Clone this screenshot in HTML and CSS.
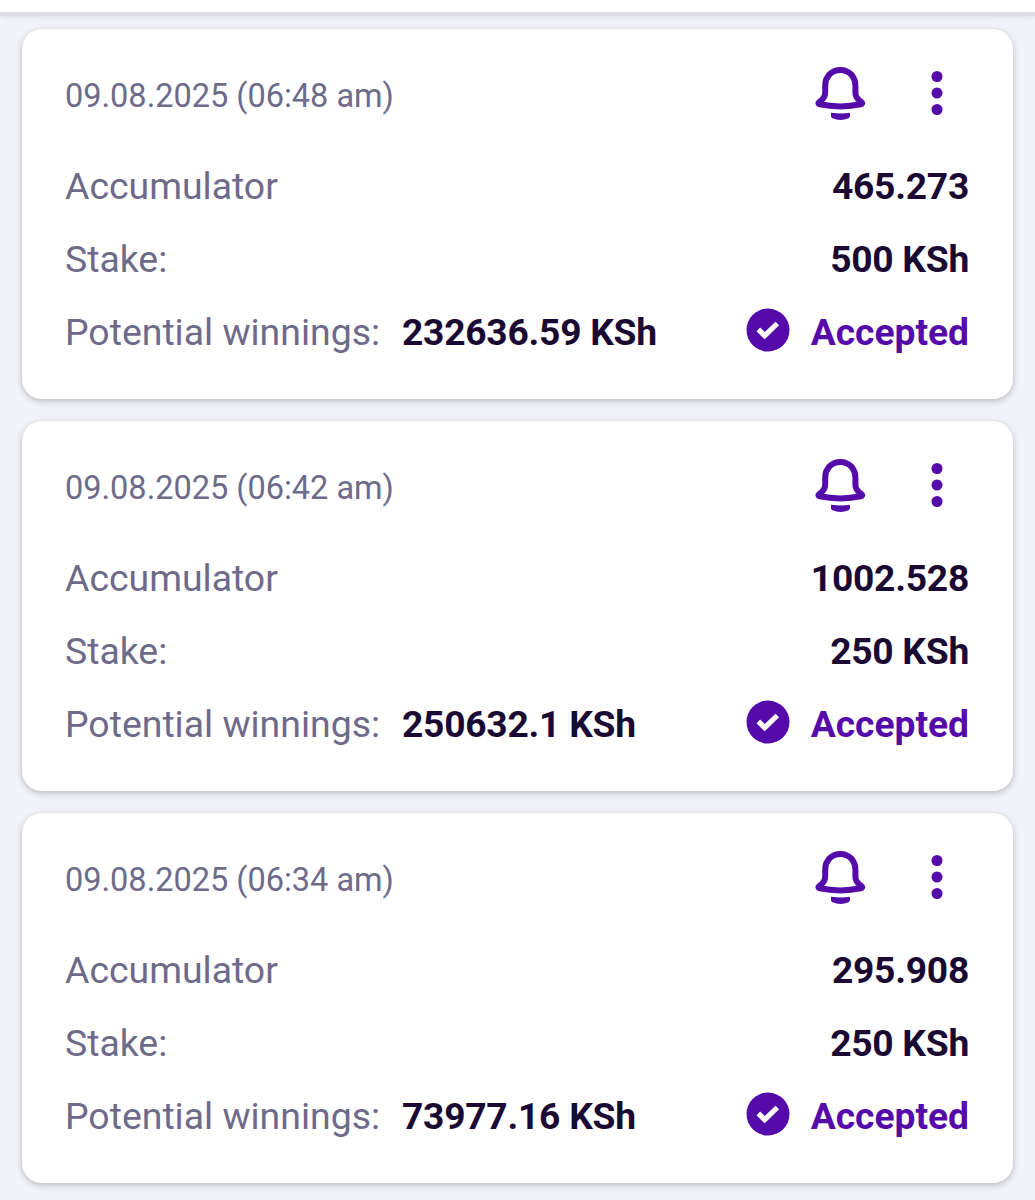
FILE: index.html
```html
<!DOCTYPE html>
<html lang="en">
<head>
  <meta charset="UTF-8" />
  <meta name="viewport" content="width=device-width, initial-scale=1.0" />
  <title>Bet History</title>
  <link rel="stylesheet" href="styles.css">
</head>
<body>
  <svg class="sprite" width="0" height="0">
    <symbol id="bell" viewBox="0 0 52 56">
      <path d="M26.300 4C17 4 11.200 11 11.200 20v6.500c0 4-2 7-6 9.500-1.300.8-1 2 .3 2.300 13.500 2.700 28.100 2.700 41.600 0 1.300-.3 1.600-1.500.3-2.300-4-2.500-6-5.500-6-9.500V20C41.400 11 35.600 4 26.300 4z" fill="none" stroke="currentColor" stroke-width="6" stroke-linejoin="round"/>
      <path d="M17 46.800q9.500 1.400 19 0v3.200q0 1.500-1.500 2.200-8 3.600-16 0Q17 51.500 17 50z" fill="currentColor"/>
    </symbol>
    <symbol id="dots" viewBox="0 0 12 46">
      <circle cx="6" cy="6.500" r="5.500" fill="currentColor"/>
      <circle cx="6" cy="23" r="5.500" fill="currentColor"/>
      <circle cx="6" cy="39.500" r="5.500" fill="currentColor"/>
    </symbol>
    <symbol id="check" viewBox="0 0 44 44">
      <circle cx="22" cy="22" r="21.500" fill="currentColor"/>
      <path d="M12.300 21.300l6.400 6.400L31.300 15.500" fill="none" stroke="#fff" stroke-width="5.200"/>
    </symbol>
  </svg>

  <header class="topbar"></header>

  <main class="bets">
    <section class="card">
      <div class="card-head">
        <span class="date">09.08.2025 (06:48 am)</span>
        <svg class="bell"><use href="#bell"/></svg>
        <svg class="dots"><use href="#dots"/></svg>
      </div>
      <div class="row"><span>Accumulator</span><b>465.273</b></div>
      <div class="row"><span>Stake:</span><b>500 KSh</b></div>
      <div class="row">
        <span>Potential winnings:</span><b class="win">232636.59 KSh</b>
        <span class="status"><svg class="check"><use href="#check"/></svg>Accepted</span>
      </div>
    </section>

    <section class="card">
      <div class="card-head">
        <span class="date">09.08.2025 (06:42 am)</span>
        <svg class="bell"><use href="#bell"/></svg>
        <svg class="dots"><use href="#dots"/></svg>
      </div>
      <div class="row"><span>Accumulator</span><b>1002.528</b></div>
      <div class="row"><span>Stake:</span><b>250 KSh</b></div>
      <div class="row">
        <span>Potential winnings:</span><b class="win">250632.1 KSh</b>
        <span class="status"><svg class="check"><use href="#check"/></svg>Accepted</span>
      </div>
    </section>

    <section class="card">
      <div class="card-head">
        <span class="date">09.08.2025 (06:34 am)</span>
        <svg class="bell"><use href="#bell"/></svg>
        <svg class="dots"><use href="#dots"/></svg>
      </div>
      <div class="row"><span>Accumulator</span><b>295.908</b></div>
      <div class="row"><span>Stake:</span><b>250 KSh</b></div>
      <div class="row">
        <span>Potential winnings:</span><b class="win">73977.16 KSh</b>
        <span class="status"><svg class="check"><use href="#check"/></svg>Accepted</span>
      </div>
    </section>
  </main>
</body>
</html>
```
FILE: styles.css
```css
* {
  box-sizing: border-box;
}
body {
  margin: 0;
  background: #f3f4f9;
  color: #6e6a8a;
  font-family: Roboto, sans-serif;
  font-size: 37.4px;
}
.sprite {
  display: block;
}
.topbar {
  height: 12px;
  background: #fff;
  box-shadow: 0 4px 1px #dcdde3, 0 4px 10px rgba(0, 0, 0, 0.1);
}
.bets {
  display: flex;
  flex-direction: column;
  gap: 22px;
  padding: 17px 22px;
}
.card {
  height: 370px;
  padding: 31px 44px 0 43px;
  background: #fff;
  border-radius: 20px;
  box-shadow: 0 2px 7px rgba(0, 0, 0, 0.25);
}
.card-head {
  display: flex;
  align-items: center;
  height: 70px;
  margin-bottom: 19px;
  color: #540ba9;
}
.date {
  margin-right: auto;
  padding-top: 2px;
  color: #6e6a8a;
  font-size: 32.5px;
}
.bell {
  width: 52px;
  height: 56px;
  margin: 0 65px 2px 0;
}
.dots {
  width: 12px;
  height: 46px;
  margin: 0 26px 4px 0;
}
.row {
  display: flex;
  align-items: center;
  height: 73px;
  white-space: nowrap;
}
.row b {
  margin-left: auto;
  color: #1a0a33;
  font-size: 37.2px;
  font-weight: 700;
  letter-spacing: -0.25px;
}
.row .win {
  margin-left: 22px;
}
.status {
  display: flex;
  align-items: center;
  margin-left: auto;
  color: #540ba9;
  font-size: 37.2px;
  font-weight: 700;
}
.check {
  width: 44px;
  height: 44px;
  margin: 0 21px 3px 0;
}
```
